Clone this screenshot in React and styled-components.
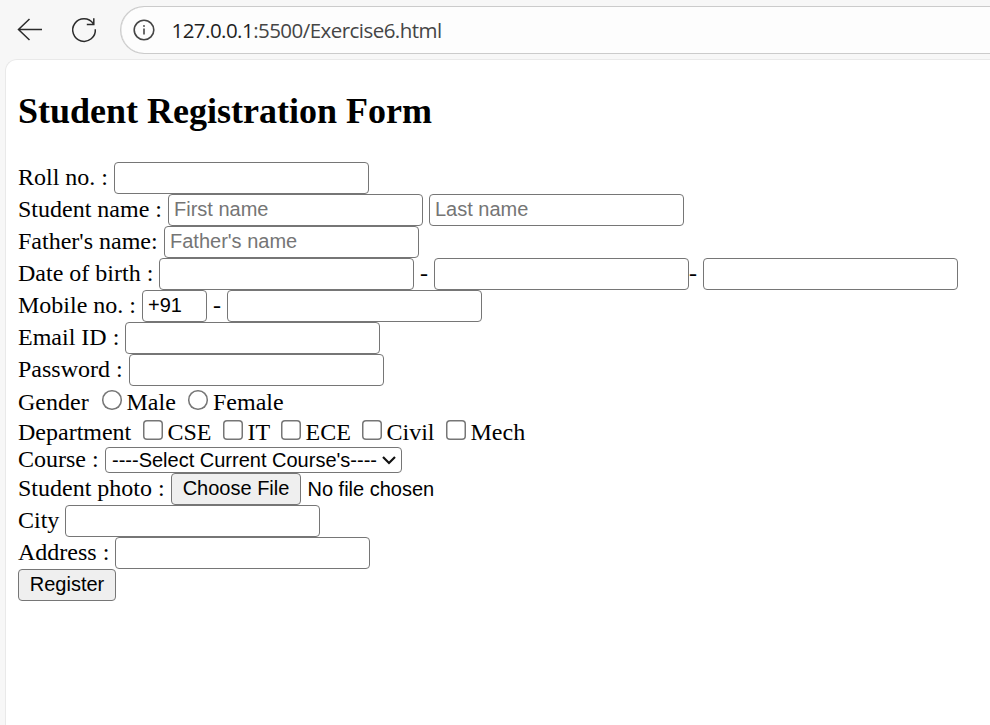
import React from "react";
import styled, { createGlobalStyle } from "styled-components";

const GlobalStyle = createGlobalStyle`
  * { box-sizing: border-box; }
  body { margin: 0; background: #f7f7f7; overflow: hidden; }
`;

const Browser = styled.div`
  display: flex;
  flex-direction: column;
  height: 725px;
  overflow: hidden;
  background: #f7f7f7;
`;

const Toolbar = styled.header`
  display: flex;
  flex: none;
  height: 59px;
  padding: 6px 0 0 16px;
`;

const ToolIcon = styled.svg`
  flex: none;
  width: 28px;
  height: 28px;
  margin: 10px ${(p) => p.$gap}px 0 0;
  fill: none;
  stroke: #2b2b2b;
  stroke-width: 1.5;
`;

const AddressBar = styled.div`
  display: flex;
  flex: 1;
  height: 48px;
  padding-left: 11px;
  border: 1px solid #cbcbcb;
  border-right: 0;
  border-radius: 24px 0 0 24px;
  background: #fdfdfd;
  box-shadow: inset 0.5px 0 0 #d8d8d8;
`;

const InfoIcon = styled.svg`
  flex: none;
  width: 24px;
  height: 24px;
  margin: 11px 15.5px 0 0;
  fill: none;
  stroke: #454545;
  stroke-width: 1.6;
`;

const Url = styled.span`
  color: #454545;
  font: 20.5px/47px "Open Sans", "Noto Sans", sans-serif;
  letter-spacing: -0.54px;
  white-space: pre;
`;

const Host = styled.span`
  color: #1f1f1f;
`;

const Page = styled.main`
  flex: 1;
  margin-left: 5px;
  padding: 31px 0 0 12px;
  border: 1px solid #e9e9e9;
  border-right: 0;
  border-bottom: 0;
  border-radius: 12px 0 0 0;
  background: #fff;
  color: #000;
  font-family: "Liberation Serif", serif;
`;

const Title = styled.h2`
  height: 41px;
  margin: 0 0 30px;
  font-size: 36px;
  line-height: 41px;
  white-space: nowrap;
`;

const Row = styled.div`
  display: flex;
  height: ${(p) => p.$height || 32}px;
`;

const Label = styled.span`
  flex: none;
  width: ${(p) => p.$width}px;
  padding-left: ${(p) => p.$indent || 0}px;
  font-size: 24px;
  line-height: ${(p) => p.$line || 30}px;
  white-space: pre;
`;

const Field = styled.input`
  flex: none;
  width: ${(p) => p.$width || 255}px;
  height: 32px;
  margin: 0;
  padding: 1px 5px 3px;
  border: 1px solid #767676;
  border-radius: 4px;
  outline: 0;
  background: #fff;
  color: #000;
  font: 20px "Liberation Sans", sans-serif;
  &::placeholder { color: #757575; }
`;

const Choice = styled.input`
  appearance: none;
  flex: none;
  width: 19.5px;
  height: 19.5px;
  margin: ${(p) => p.$top}px 0 0;
  border: 0;
  border-radius: ${(p) => (p.type === "radio" ? "50%" : "4px")};
  background: #fff;
  box-shadow: inset 0 0 0 1.5px #767676;
`;

const SelectBox = styled.div`
  position: relative;
  width: 297px;
  height: 26px;
`;

const Select = styled.select`
  appearance: none;
  width: 100%;
  height: 100%;
  margin: 0;
  padding: 1px 0 0 6px;
  border: 1px solid #767676;
  border-radius: 4px;
  background: #fff;
  color: #000;
  font: 20px/23px "Liberation Sans", sans-serif;
`;

const Chevron = styled.svg`
  position: absolute;
  right: 5px;
  top: 8px;
  width: 16px;
  height: 11px;
  fill: none;
  stroke: #111;
  stroke-width: 2.2;
  pointer-events: none;
`;

const Button = styled.button`
  flex: none;
  width: ${(p) => p.$width}px;
  height: 32px;
  padding: 0 0 2px;
  border: 1px solid #767676;
  border-radius: 4px;
  background: #efefef;
  color: #000;
  font: 20px "Liberation Sans", sans-serif;
  white-space: nowrap;
`;

const FileStatus = styled.span`
  padding-left: 6.5px;
  font: 20px/33px "Liberation Sans", sans-serif;
`;

const departments = [
  { name: "CSE", width: 60.5 },
  { name: "IT", width: 38.5 },
  { name: "ECE", width: 61.5 },
  { name: "Civil", width: 64.5 },
  { name: "Mech", width: 70 },
];

export default function App() {
  return (
    <Browser>
      <GlobalStyle />
      <Toolbar>
        <ToolIcon $gap={26} viewBox="0 0 28 28">
          <path d="M26 13.5H2.5M13.5 3 2.5 13.5l11 10.5" />
        </ToolIcon>
        <ToolIcon $gap={22} viewBox="0 0 28 28">
          <path d="M23.3 7.6A11.3 11.3 0 1 0 25.3 13.2M23.8 2.3v6.3h-7" />
        </ToolIcon>
        <AddressBar>
          <InfoIcon viewBox="0 0 24 24">
            <circle cx="12" cy="12" r="9.8" />
            <path d="M12 10.5v6" />
            <circle cx="12" cy="8" r="0.9" fill="#454545" stroke="none" />
          </InfoIcon>
          <Url><Host>127.0.0.1</Host>:5500/Exercise6.html</Url>
        </AddressBar>
      </Toolbar>
      <Page>
        <Title>Student Registration Form</Title>
        <Row>
          <Label $width={96}>Roll no. :</Label>
          <Field />
        </Row>
        <Row>
          <Label $width={150}>Student name :</Label>
          <Field placeholder="First name" />
          <Label $width={6} />
          <Field placeholder="Last name" />
        </Row>
        <Row>
          <Label $width={146}>Father's name:</Label>
          <Field placeholder="Father's name" />
        </Row>
        <Row>
          <Label $width={141}>Date of birth :</Label>
          <Field />
          <Label $width={20} $indent={6}>-</Label>
          <Field />
          <Label $width={14}>-</Label>
          <Field />
        </Row>
        <Row>
          <Label $width={124}>Mobile no. :</Label>
          <Field $width={65} defaultValue="+91" />
          <Label $width={20} $indent={6}>-</Label>
          <Field />
        </Row>
        <Row>
          <Label $width={107}>Email ID :</Label>
          <Field />
        </Row>
        <Row>
          <Label $width={111}>Password :</Label>
          <Field type="password" />
        </Row>
        <Row $height={31}>
          <Label $width={84} $line={32}>Gender</Label>
          <Choice type="radio" name="gender" $top={4} />
          <Label $width={66.5} $indent={5} $line={32}>Male</Label>
          <Choice type="radio" name="gender" $top={4} />
          <Label $width={80} $indent={5.5} $line={32}>Female</Label>
        </Row>
        <Row $height={30}>
          <Label $width={125} $line={30}>Department</Label>
          {departments.map((d) => (
            <React.Fragment key={d.name}>
              <Choice type="checkbox" $top={3} />
              <Label $width={d.width} $indent={5} $line={30}>{d.name}</Label>
            </React.Fragment>
          ))}
        </Row>
        <Row $height={26}>
          <Label $width={87} $line={24}>Course :</Label>
          <SelectBox>
            <Select>
              <option>----Select Current Course's----</option>
            </Select>
            <Chevron viewBox="0 0 16 11"><path d="m2 2 6 6 6-6" /></Chevron>
          </SelectBox>
        </Row>
        <Row>
          <Label $width={153}>Student photo :</Label>
          <Button type="button" $width={130}>Choose File</Button>
          <FileStatus>No file chosen</FileStatus>
        </Row>
        <Row>
          <Label $width={47}>City</Label>
          <Field />
        </Row>
        <Row>
          <Label $width={97}>Address :</Label>
          <Field />
        </Row>
        <Row>
          <Button type="button" $width={98}>Register</Button>
        </Row>
      </Page>
    </Browser>
  );
}
